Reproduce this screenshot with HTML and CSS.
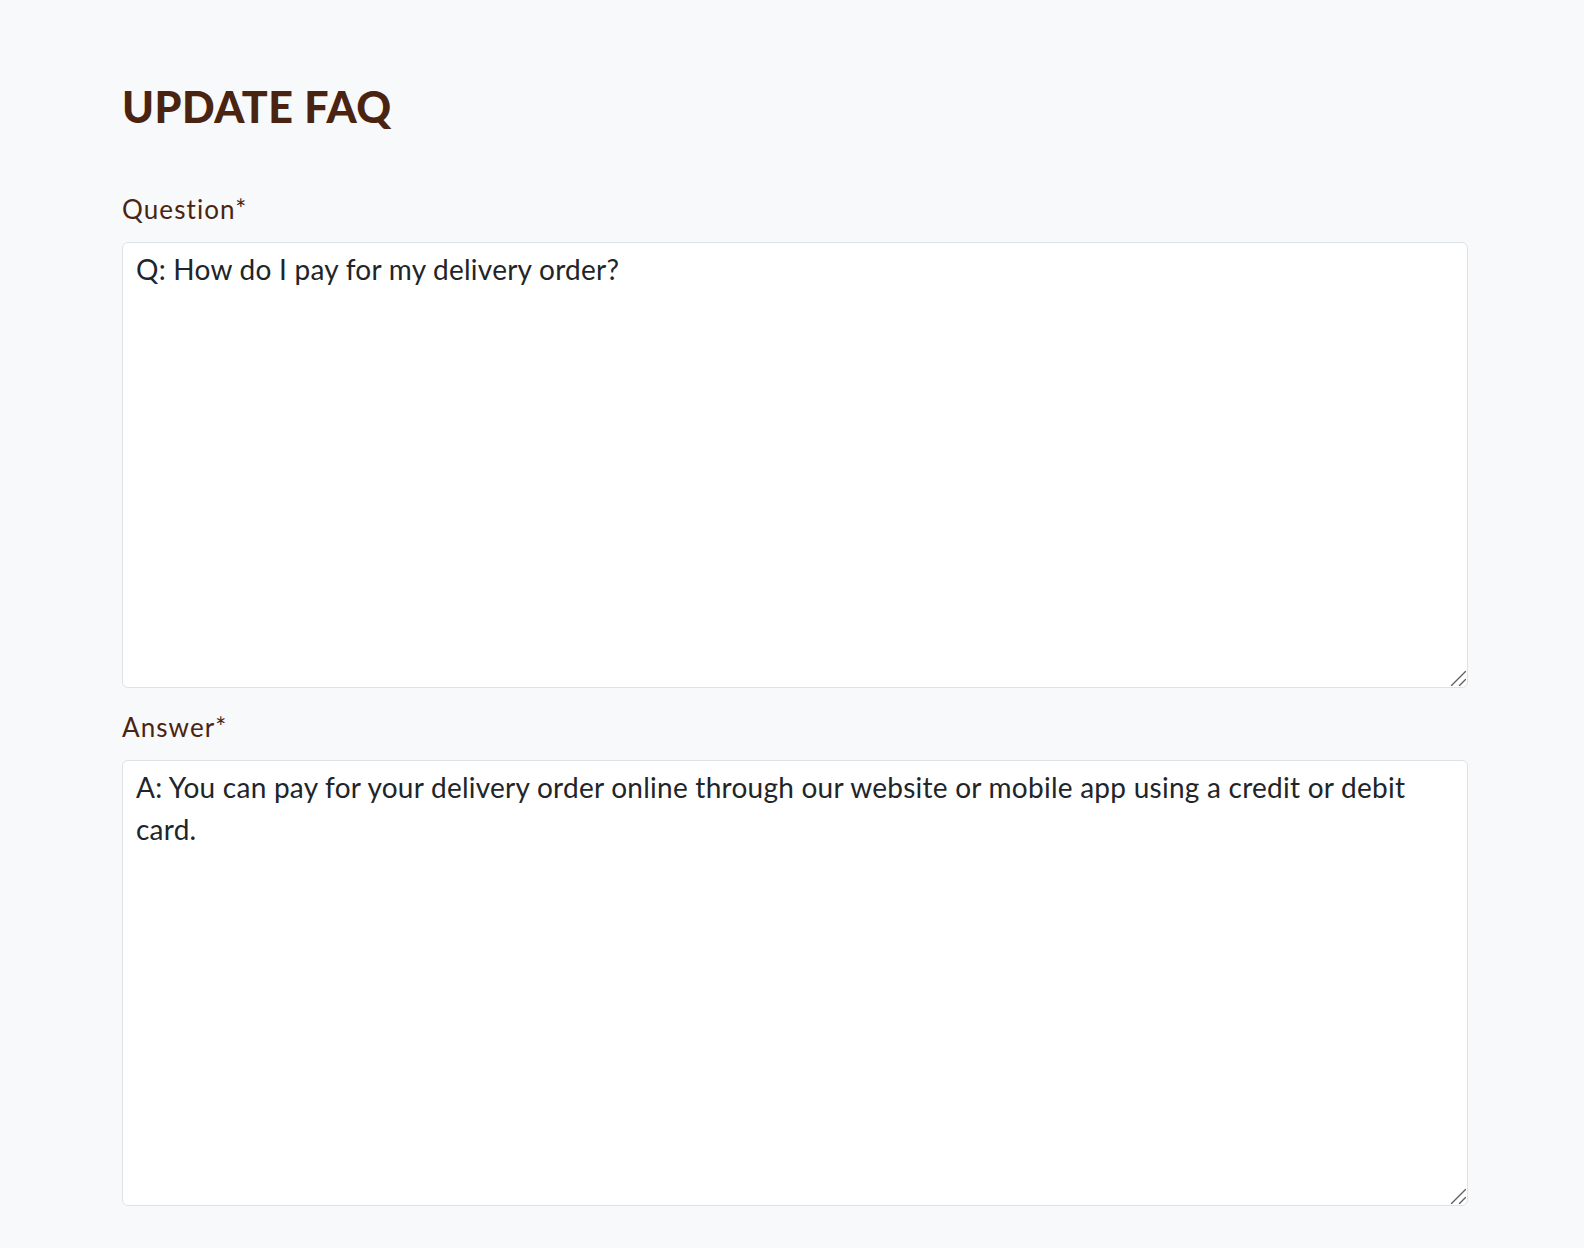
FILE: index.html
```html
<!DOCTYPE html>
<html lang="en">
<head>
<meta charset="utf-8">
<title>Update FAQ</title>
<link rel="stylesheet" href="styles.css">
</head>
<body>
<main class="page">
  <h1 class="title">UPDATE FAQ</h1>
  <form class="faq-form">
    <div class="field">
      <label class="field-label" for="question">Question*</label>
      <div class="input-wrap">
        <textarea class="field-input" id="question">Q: How do I pay for my delivery order?</textarea>
        <svg class="grip" width="16" height="16" viewBox="0 0 16 16" aria-hidden="true">
          <path d="M1.5 15.5 L15.5 1.5 M9.5 15.5 L15.5 9.5" />
        </svg>
      </div>
    </div>
    <div class="field">
      <label class="field-label" for="answer">Answer*</label>
      <div class="input-wrap">
        <textarea class="field-input" id="answer">A: You can pay for your delivery order online through our website or mobile app using a credit or debit card.</textarea>
        <svg class="grip" width="16" height="16" viewBox="0 0 16 16" aria-hidden="true">
          <path d="M1.5 15.5 L15.5 1.5 M9.5 15.5 L15.5 9.5" />
        </svg>
      </div>
    </div>
  </form>
</main>
</body>
</html>
```

FILE: styles.css
```css
html, body {
  margin: 0;
  padding: 0;
  background: #f8f9fa;
}
.page {
  padding: 82px 116px 0 122px;
  font-family: "Lato", "Noto Sans", sans-serif;
}
.title {
  margin: 0;
  font-size: 43px;
  font-weight: 900;
  line-height: 50px;
  letter-spacing: 0.5px;
  color: #4a2411;
}
.faq-form {
  margin-top: 62px;
  display: flex;
  flex-direction: column;
  gap: 24px;
}
.field {
  display: flex;
  flex-direction: column;
  gap: 18px;
}
.field-label {
  font-size: 26px;
  line-height: 30px;
  letter-spacing: 1.1px;
  color: #4a2411;
}
.input-wrap {
  position: relative;
}
.field-input {
  display: block;
  box-sizing: border-box;
  width: 100%;
  height: 446px;
  margin: 0;
  padding: 5px 12px 6px 13px;
  border: 1px solid #dee2e6;
  border-radius: 6px;
  background: #fff;
  color: #212529;
  font-family: "Lato", "Noto Sans", sans-serif;
  font-size: 28px;
  line-height: 42px;
  letter-spacing: 0.25px;
  resize: none;
  outline: none;
}
.grip {
  position: absolute;
  right: 2px;
  bottom: 2px;
  pointer-events: none;
}
.grip path {
  fill: none;
  stroke: #5f5f5f;
  stroke-width: 1.4;
  stroke-linecap: round;
}
```
